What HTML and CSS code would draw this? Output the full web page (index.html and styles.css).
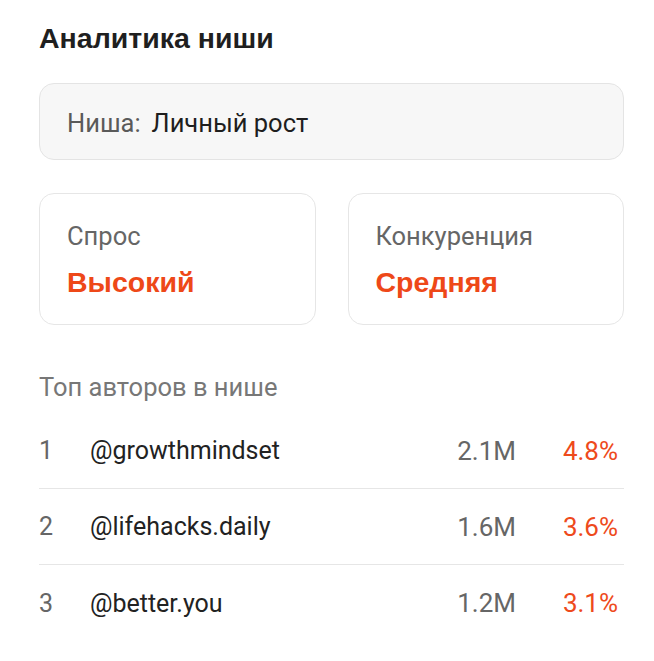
FILE: index.html
```html
<!DOCTYPE html>
<html lang="ru">
<head>
<meta charset="utf-8">
<link rel="stylesheet" href="styles.css">
</head>
<body>
<main class="page">
  <h1 class="title">Аналитика ниши</h1>
  <div class="niche">
    <span class="niche-label">Ниша:</span>
    <span class="niche-value">Личный рост</span>
  </div>
  <div class="stats">
    <div class="stat">
      <div class="stat-label">Спрос</div>
      <div class="stat-value">Высокий</div>
    </div>
    <div class="stat">
      <div class="stat-label">Конкуренция</div>
      <div class="stat-value">Средняя</div>
    </div>
  </div>
  <div class="section-title">Топ авторов в нише</div>
  <ul class="authors">
    <li class="author">
      <span class="rank">1</span>
      <span class="handle">@growthmindset</span>
      <span class="reach">2.1M</span>
      <span class="er">4.8%</span>
    </li>
    <li class="author">
      <span class="rank">2</span>
      <span class="handle">@lifehacks.daily</span>
      <span class="reach">1.6M</span>
      <span class="er">3.6%</span>
    </li>
    <li class="author">
      <span class="rank">3</span>
      <span class="handle">@better.you</span>
      <span class="reach">1.2M</span>
      <span class="er">3.1%</span>
    </li>
  </ul>
</main>
</body>
</html>
```
FILE: styles.css
```css
html, body {
  margin: 0;
  padding: 0;
  background: #ffffff;
}
body {
  font-family: Roboto, "Noto Sans", sans-serif;
  color: #222;
}
.page {
  padding: 20px 30px 0 39px;
  display: flex;
  flex-direction: column;
}
.title {
  margin: 0;
  font-family: "Liberation Sans", Arial, sans-serif;
  font-size: 28.5px;
  line-height: 36px;
  font-weight: 700;
  color: #1f1f1f;
}
.niche {
  margin-top: 27px;
  height: 77px;
  box-sizing: border-box;
  border: 1.5px solid #e4e4e4;
  border-radius: 15px;
  background: #f7f7f7;
  display: flex;
  align-items: center;
  padding-left: 27px;
  padding-top: 3px;
  gap: 11px;
  font-size: 25.5px;
}
.niche-label {
  color: #5a5a5a;
}
.niche-value {
  color: #1e1e1e;
}
.stats {
  margin-top: 33px;
  display: grid;
  grid-template-columns: 1fr 1fr;
  gap: 32px;
}
.stat {
  height: 132px;
  box-sizing: border-box;
  border: 1.5px solid #e6e6e6;
  border-radius: 15px;
  background: #fff;
  padding: 26px 0 0 27px;
}
.stat-label {
  font-size: 25.5px;
  line-height: 32px;
  color: #666;
}
.stat-value {
  margin-top: 14px;
  font-family: "Liberation Sans", Arial, sans-serif;
  font-weight: 700;
  font-size: 28.5px;
  line-height: 32px;
  color: #ee4818;
}
.section-title {
  margin-top: 46px;
  font-size: 25.5px;
  line-height: 32px;
  color: #777;
}
.authors {
  list-style: none;
  margin: 10px 0 0 0;
  padding: 0;
}
.author {
  display: flex;
  align-items: center;
  height: 76px;
  font-size: 25px;
  border-bottom: 1.5px solid #e6e6e6;
  box-sizing: border-box;
}
.author:last-child {
  border-bottom: none;
}
.rank {
  width: 51px;
  color: #666;
}
.handle {
  flex: 1;
  color: #222;
}
.reach {
  color: #666;
  font-size: 26px;
  text-align: right;
}
.er {
  color: #ee4a1c;
  font-size: 26px;
  width: 108px;
  text-align: right;
  padding-right: 6px;
  box-sizing: border-box;
}
```
